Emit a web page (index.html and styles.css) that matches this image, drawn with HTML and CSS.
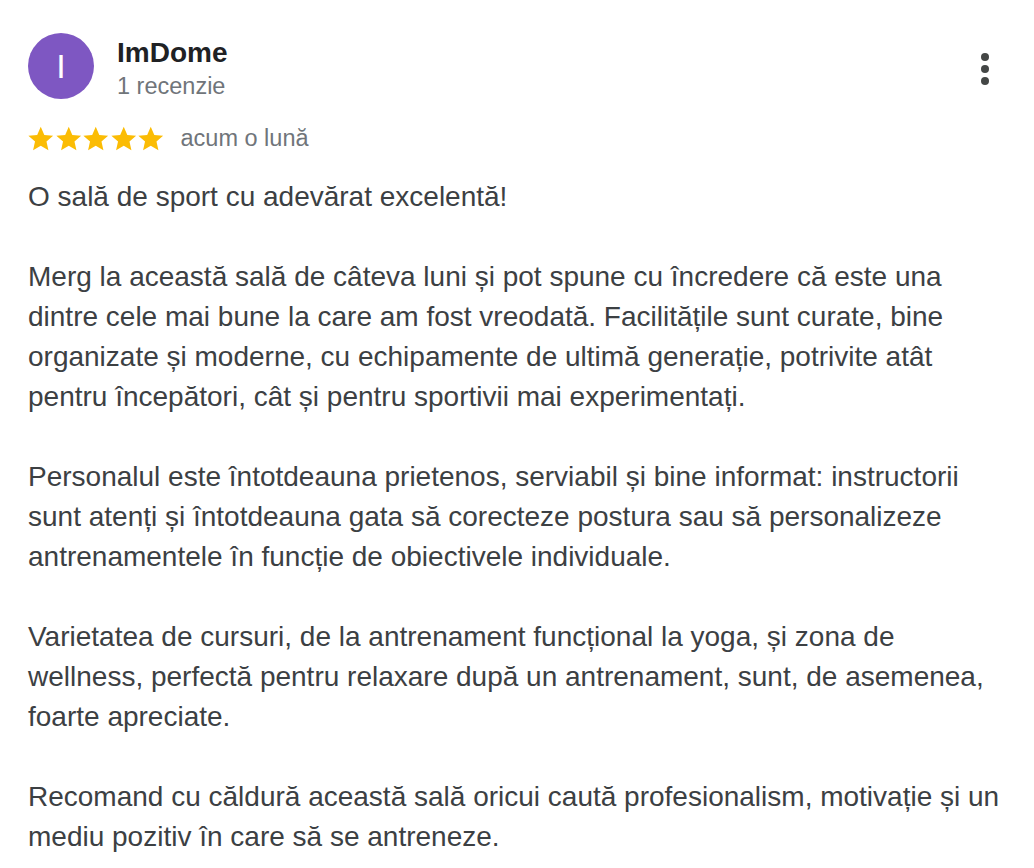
FILE: index.html
```html
<!DOCTYPE html>
<html lang="ro">
<head>
<meta charset="utf-8">
<link rel="stylesheet" href="styles.css">
</head>
<body>
<div class="review">
  <div class="header">
    <div class="avatar">I</div>
    <div class="who">
      <div class="name">ImDome</div>
      <div class="count">1 recenzie</div>
    </div>
    <div class="more">
      <svg width="10" height="34" viewBox="0 0 10 34"><circle cx="5" cy="5" r="4"/><circle cx="5" cy="17" r="4"/><circle cx="5" cy="29" r="4"/></svg>
    </div>
  </div>
  <div class="rating">
    <div class="stars">
      <svg viewBox="0 0 24 24" class="star"><path d="M12 1.6l3.1 7.1 7.7.7-5.8 5.1 1.7 7.6L12 18.1l-6.7 4 1.7-7.6-5.8-5.1 7.7-.7z"/></svg>
      <svg viewBox="0 0 24 24" class="star"><path d="M12 1.6l3.1 7.1 7.7.7-5.8 5.1 1.7 7.6L12 18.1l-6.7 4 1.7-7.6-5.8-5.1 7.7-.7z"/></svg>
      <svg viewBox="0 0 24 24" class="star"><path d="M12 1.6l3.1 7.1 7.7.7-5.8 5.1 1.7 7.6L12 18.1l-6.7 4 1.7-7.6-5.8-5.1 7.7-.7z"/></svg>
      <svg viewBox="0 0 24 24" class="star"><path d="M12 1.6l3.1 7.1 7.7.7-5.8 5.1 1.7 7.6L12 18.1l-6.7 4 1.7-7.6-5.8-5.1 7.7-.7z"/></svg>
      <svg viewBox="0 0 24 24" class="star"><path d="M12 1.6l3.1 7.1 7.7.7-5.8 5.1 1.7 7.6L12 18.1l-6.7 4 1.7-7.6-5.8-5.1 7.7-.7z"/></svg>
    </div>
    <span class="date">acum o lună</span>
  </div>
  <div class="body">
    <p>O sală de sport cu adevărat excelentă!</p>
    <p>Merg la această sală de câteva luni și pot spune cu încredere că este una dintre cele mai bune la care am fost vreodată. Facilitățile sunt curate, bine organizate și moderne, cu echipamente de ultimă generație, potrivite atât pentru începători, cât și pentru sportivii mai experimentați.</p>
    <p>Personalul este întotdeauna prietenos, serviabil și bine informat: instructorii sunt atenți și întotdeauna gata să corecteze postura sau să personalizeze antrenamentele în funcție de obiectivele individuale.</p>
    <p>Varietatea de cursuri, de la antrenament funcțional la yoga, și zona de wellness, perfectă pentru relaxare după un antrenament, sunt, de asemenea, foarte apreciate.</p>
    <p>Recomand cu căldură această sală oricui caută profesionalism, motivație și un mediu pozitiv în care să se antreneze.</p>
  </div>
</div>
</body>
</html>
```
FILE: styles.css
```css
html, body {
  margin: 0;
  padding: 0;
  background: #ffffff;
}
body {
  font-family: "Liberation Sans", Arial, Helvetica, sans-serif;
  color: #3c4043;
}
.review {
  padding: 33px 20px 0 28px;
  width: 986px;
}
.header {
  display: flex;
  align-items: flex-start;
}
.avatar {
  width: 66px;
  height: 66px;
  border-radius: 50%;
  background: #7e57c2;
  color: #ffffff;
  font-size: 34px;
  display: flex;
  align-items: center;
  justify-content: center;
  flex-shrink: 0;
}
.who {
  margin-left: 23px;
  flex: 1;
  padding-top: 4px;
}
.name {
  font-weight: bold;
  font-size: 28px;
  line-height: 32px;
  color: #202124;
}
.count {
  font-size: 23.5px;
  line-height: 34px;
  color: #70757a;
}
.more {
  padding-top: 19px;
  padding-right: 24px;
  fill: #444746;
}
.rating {
  display: flex;
  align-items: center;
  margin-top: 22px;
}
.stars {
  display: flex;
  gap: 0;
  margin-left: -1px;
}
.star {
  width: 27.5px;
  height: 27.5px;
  fill: #fbbc04;
}
.date {
  margin-left: 16px;
  font-size: 23.5px;
  color: #70757a;
}
.body {
  margin-top: 24px;
  font-size: 28px;
  line-height: 40px;
  color: #3c4043;
}
.body p {
  margin: 0 0 40px 0;
}
```
